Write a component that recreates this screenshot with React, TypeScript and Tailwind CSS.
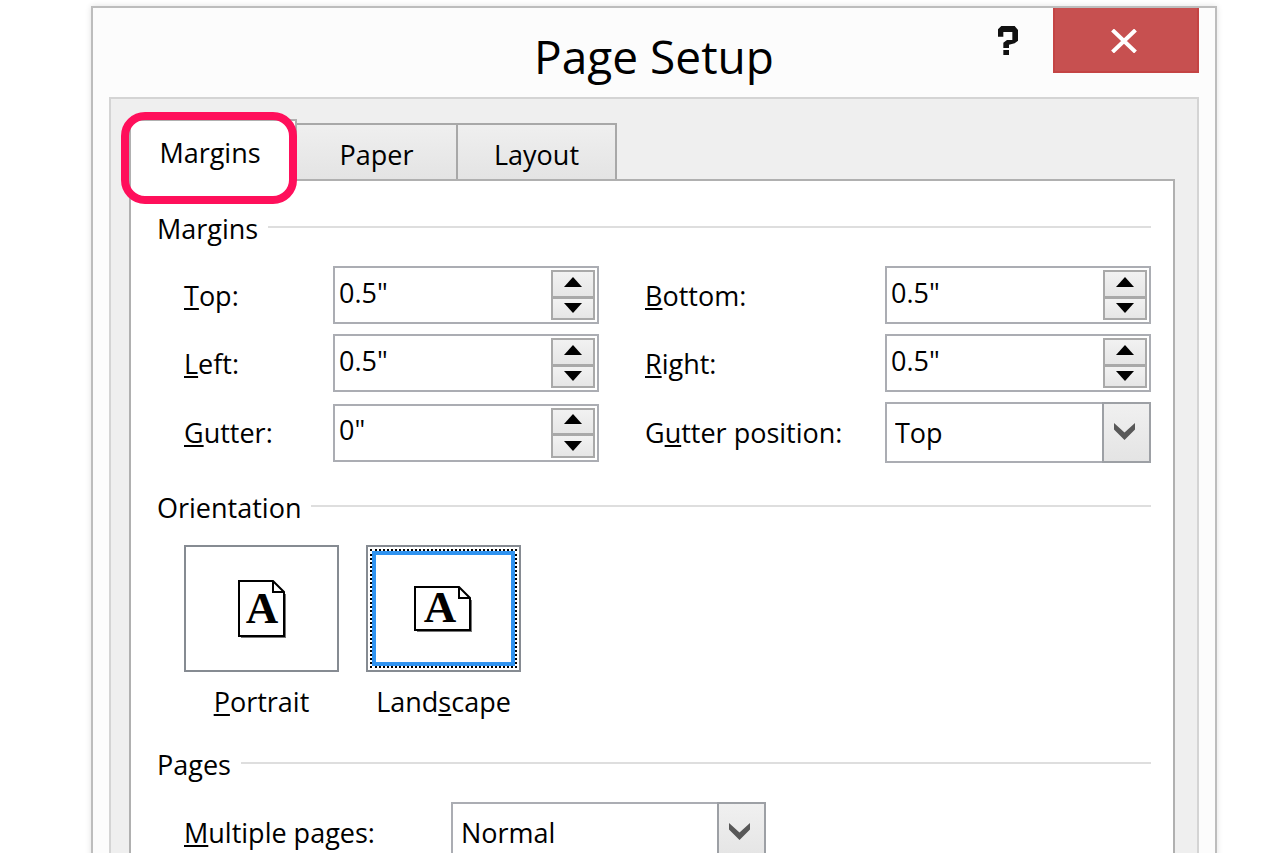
import { useState, type ReactNode } from 'react';

function SectionHeading({ children }: { children: ReactNode }) {
  return (
    <div className="mb-5 flex items-start gap-[10px]">
      <h2 className="pt-px leading-[35px]">{children}</h2>
      <span className="mt-4 h-[2px] flex-1 bg-[#dedede]" />
    </div>
  );
}

function Arrow({ down = false }: { down?: boolean }) {
  return (
    <svg width="18" height="10" viewBox="0 0 18 10" aria-hidden="true">
      <path d={down ? 'M0 0h18L9 10z' : 'M0 10h18L9 0z'} fill="#000" />
    </svg>
  );
}

function SpinBox({ id, initial }: { id: string; initial: number }) {
  const [text, setText] = useState(`${initial}"`);
  const step = (delta: number) => {
    const next = Math.max(0, (parseFloat(text) || 0) + delta);
    setText(`${Math.round(next * 10) / 10}"`);
  };
  return (
    <div className="flex h-[58px] w-full border-2 border-[#abadb3] bg-white p-[2px]">
      <input
        id={id}
        value={text}
        onChange={(e) => setText(e.target.value)}
        className="min-w-0 flex-1 bg-transparent pb-1 pl-[2px] outline-none"
      />
      <div className="flex w-[44px] flex-col">
        <button
          type="button"
          aria-label="Increase"
          onClick={() => step(0.1)}
          className="flex flex-1 items-center justify-center border-2 border-b border-[#a9a9a9] bg-linear-to-b from-[#f2f2f2] to-[#e6e6e6] pb-1"
        >
          <Arrow />
        </button>
        <button
          type="button"
          aria-label="Decrease"
          onClick={() => step(-0.1)}
          className="flex flex-1 items-center justify-center border-2 border-[#a9a9a9] bg-linear-to-b from-[#f2f2f2] to-[#e6e6e6]"
        >
          <Arrow down />
        </button>
      </div>
    </div>
  );
}

function DropDown({ id, options }: { id: string; options: string[] }) {
  return (
    <div className="relative h-[61px] w-full">
      <select
        id={id}
        className="h-full w-full appearance-none border-2 border-[#abadb3] bg-white pt-[2px] pr-[52px] pl-2 outline-none"
      >
        {options.map((o) => (
          <option key={o}>{o}</option>
        ))}
      </select>
      <span className="pointer-events-none absolute inset-y-0 right-0 flex w-[49px] items-center justify-center border-2 border-[#9da0a5] bg-linear-to-b from-[#f0f0f0] to-[#e4e4e4] pr-1 pb-[2px]">
        <svg width="21" height="17" viewBox="0 0 21 17" aria-hidden="true">
          <path d="M0 0l10.500 9.500L21 0v6.500L10.500 17 0 6.500z" fill="#585858" />
        </svg>
      </span>
    </div>
  );
}

function PageIcon({ landscape = false }: { landscape?: boolean }) {
  const w = landscape ? 58 : 48;
  const h = landscape ? 46 : 58;
  return (
    <svg width={w} height={h} viewBox={`0 0 ${w} ${h}`} className="overflow-visible" aria-hidden="true">
      <path d={`M3 ${h - 1}H${w - 1}V14`} fill="none" stroke="#777" strokeWidth="2" />
      <path
        d={`M1 1H${w - 13}L${w - 2} 12V${h - 2}H1z`}
        fill="#fff"
        stroke="#000"
        strokeWidth="2"
      />
      <path d={`M${w - 13} 1V12H${w - 2}`} fill="none" stroke="#000" strokeWidth="2" />
      <text
        x={landscape ? 26 : 24}
        y={landscape ? 36 : 43}
        textAnchor="middle"
        fontSize="45"
        fontWeight="700"
        className="font-['Liberation_Serif',serif]"
      >
        A
      </text>
    </svg>
  );
}

function OrientationOption({
  landscape = false,
  selected,
  onSelect,
  children,
}: {
  landscape?: boolean;
  selected: boolean;
  onSelect: () => void;
  children: ReactNode;
}) {
  return (
    <button
      type="button"
      aria-pressed={selected}
      onClick={onSelect}
      className="flex w-[155px] flex-col items-center gap-3"
    >
      <span className="flex h-[127px] w-full border-2 border-[#868b92] bg-white p-[2px]">
        <span
          className={
            selected
              ? 'flex flex-1 border-2 border-dotted border-black'
              : 'flex flex-1 border-2 border-transparent'
          }
        >
          <span
            className={
              selected
                ? 'flex flex-1 items-center justify-center border-4 border-[#3093f0] pr-[2px]'
                : 'flex flex-1 items-center justify-center border-4 border-transparent'
            }
          >
            <PageIcon landscape={landscape} />
          </span>
        </span>
      </span>
      <span className="leading-9">{children}</span>
    </button>
  );
}

function Key({ children }: { children: string }) {
  return <span className="underline decoration-2 underline-offset-2">{children}</span>;
}

export default function App() {
  const [orientation, setOrientation] = useState('landscape');
  return (
    <div className="h-screen overflow-hidden bg-white pt-[6px] pr-[63px] pl-[91px] font-['Open_Sans','Noto_Sans',sans-serif] text-[27px] text-black">
      <div
        role="dialog"
        aria-labelledby="dialog-title"
        className="border-2 border-[#bdbdbd] bg-[#fcfcfc] shadow-[0_0_6px_rgba(0,0,0,0.12)]"
      >
        <header className="grid h-[89px] grid-cols-[1fr_auto_1fr]">
          <h1 id="dialog-title" className="col-start-2 pt-3 text-[46px] leading-[72px]">
            Page Setup
          </h1>
          <div className="flex items-start justify-end pr-4">
            <button type="button" aria-label="Help" className="flex h-[65px] w-[90px] items-center justify-center">
              <svg width="20" height="29" viewBox="0 0 60 87" aria-hidden="true">
                <path
                  d="M0 32V10L10 0H50L60 12V44L50 52L33 56V66H16V50L27 42H43V18H16V32zM16 72H33V87H16z"
                  fill="#111"
                />
              </svg>
            </button>
            <button
              type="button"
              aria-label="Close"
              className="flex h-[65px] w-[146px] items-center justify-center border-2 border-t-0 border-[#c44444] bg-[#c75050] pt-[2px] pr-1"
            >
              <svg width="28" height="24" viewBox="0 0 28 24" aria-hidden="true">
                <path d="M2.500 1L25.500 23M25.500 1L2.500 23" stroke="#fff" strokeWidth="4" />
              </svg>
            </button>
          </div>
        </header>

        <main className="mx-4 border-2 border-[#d4d4d4] bg-[#efefef] pt-5 pr-[22px] pb-10 pl-[18px]">
          <div role="tablist" className="flex items-end">
            <button
              type="button"
              role="tab"
              aria-selected="true"
              className="relative -mb-[2px] h-[62px] w-[168px] border-2 border-b-0 border-[#b0b0b0] bg-white pt-1 pr-[6px]"
            >
              Margins
              <span className="pointer-events-none absolute -top-[9px] -left-[10px] h-[92px] w-[176px] rounded-3xl border-8 border-[#ff0f5b]" />
            </button>
            <button
              type="button"
              role="tab"
              aria-selected="false"
              className="h-[56px] w-[161px] border-t-2 border-r-2 border-[#a8a8a8] bg-linear-to-b from-[#efefef] to-[#e4e4e4] pt-[6px]"
            >
              Paper
            </button>
            <button
              type="button"
              role="tab"
              aria-selected="false"
              className="h-[56px] w-[159px] border-t-2 border-r-2 border-[#a8a8a8] bg-linear-to-b from-[#efefef] to-[#e4e4e4] pt-[6px]"
            >
              Layout
            </button>
          </div>

          <div role="tabpanel" className="border-2 border-[#b0b0b0] bg-white pt-[29px] pr-[22px] pb-10 pl-[26px]">
            <SectionHeading>Margins</SectionHeading>
            <div className="grid grid-cols-[149px_266px_1fr_266px] items-center gap-y-[10px] pl-[27px]">
              <label htmlFor="top" className="pt-[2px]"><Key>T</Key>op:</label>
              <SpinBox id="top" initial={0.5} />
              <label htmlFor="bottom" className="pt-[2px] pl-[46px]"><Key>B</Key>ottom:</label>
              <SpinBox id="bottom" initial={0.5} />
              <label htmlFor="left" className="pt-[2px]"><Key>L</Key>eft:</label>
              <SpinBox id="left" initial={0.5} />
              <label htmlFor="right" className="pt-[2px] pl-[46px]"><Key>R</Key>ight:</label>
              <SpinBox id="right" initial={0.5} />
              <label htmlFor="gutter" className="pt-[2px]"><Key>G</Key>utter:</label>
              <SpinBox id="gutter" initial={0} />
              <label htmlFor="gutter-position" className="pt-[2px] pl-[46px]">G<Key>u</Key>tter position:</label>
              <DropDown id="gutter-position" options={['Top', 'Left']} />
            </div>

            <div className="mt-[26px]">
              <SectionHeading>Orientation</SectionHeading>
              <div className="flex gap-[27px] pl-[27px]">
                <OrientationOption
                  selected={orientation === 'portrait'}
                  onSelect={() => setOrientation('portrait')}
                >
                  <Key>P</Key>ortrait
                </OrientationOption>
                <OrientationOption
                  landscape
                  selected={orientation === 'landscape'}
                  onSelect={() => setOrientation('landscape')}
                >
                  Land<Key>s</Key>cape
                </OrientationOption>
              </div>
            </div>

            <div className="mt-[26px]">
              <SectionHeading>Pages</SectionHeading>
              <div className="grid grid-cols-[267px_315px] items-center pl-[27px]">
                <label htmlFor="multiple" className="pt-[2px]"><Key>M</Key>ultiple pages:</label>
                <DropDown id="multiple" options={['Normal', 'Mirror margins', '2 pages per sheet']} />
              </div>
            </div>
          </div>
        </main>
      </div>
    </div>
  );
}
